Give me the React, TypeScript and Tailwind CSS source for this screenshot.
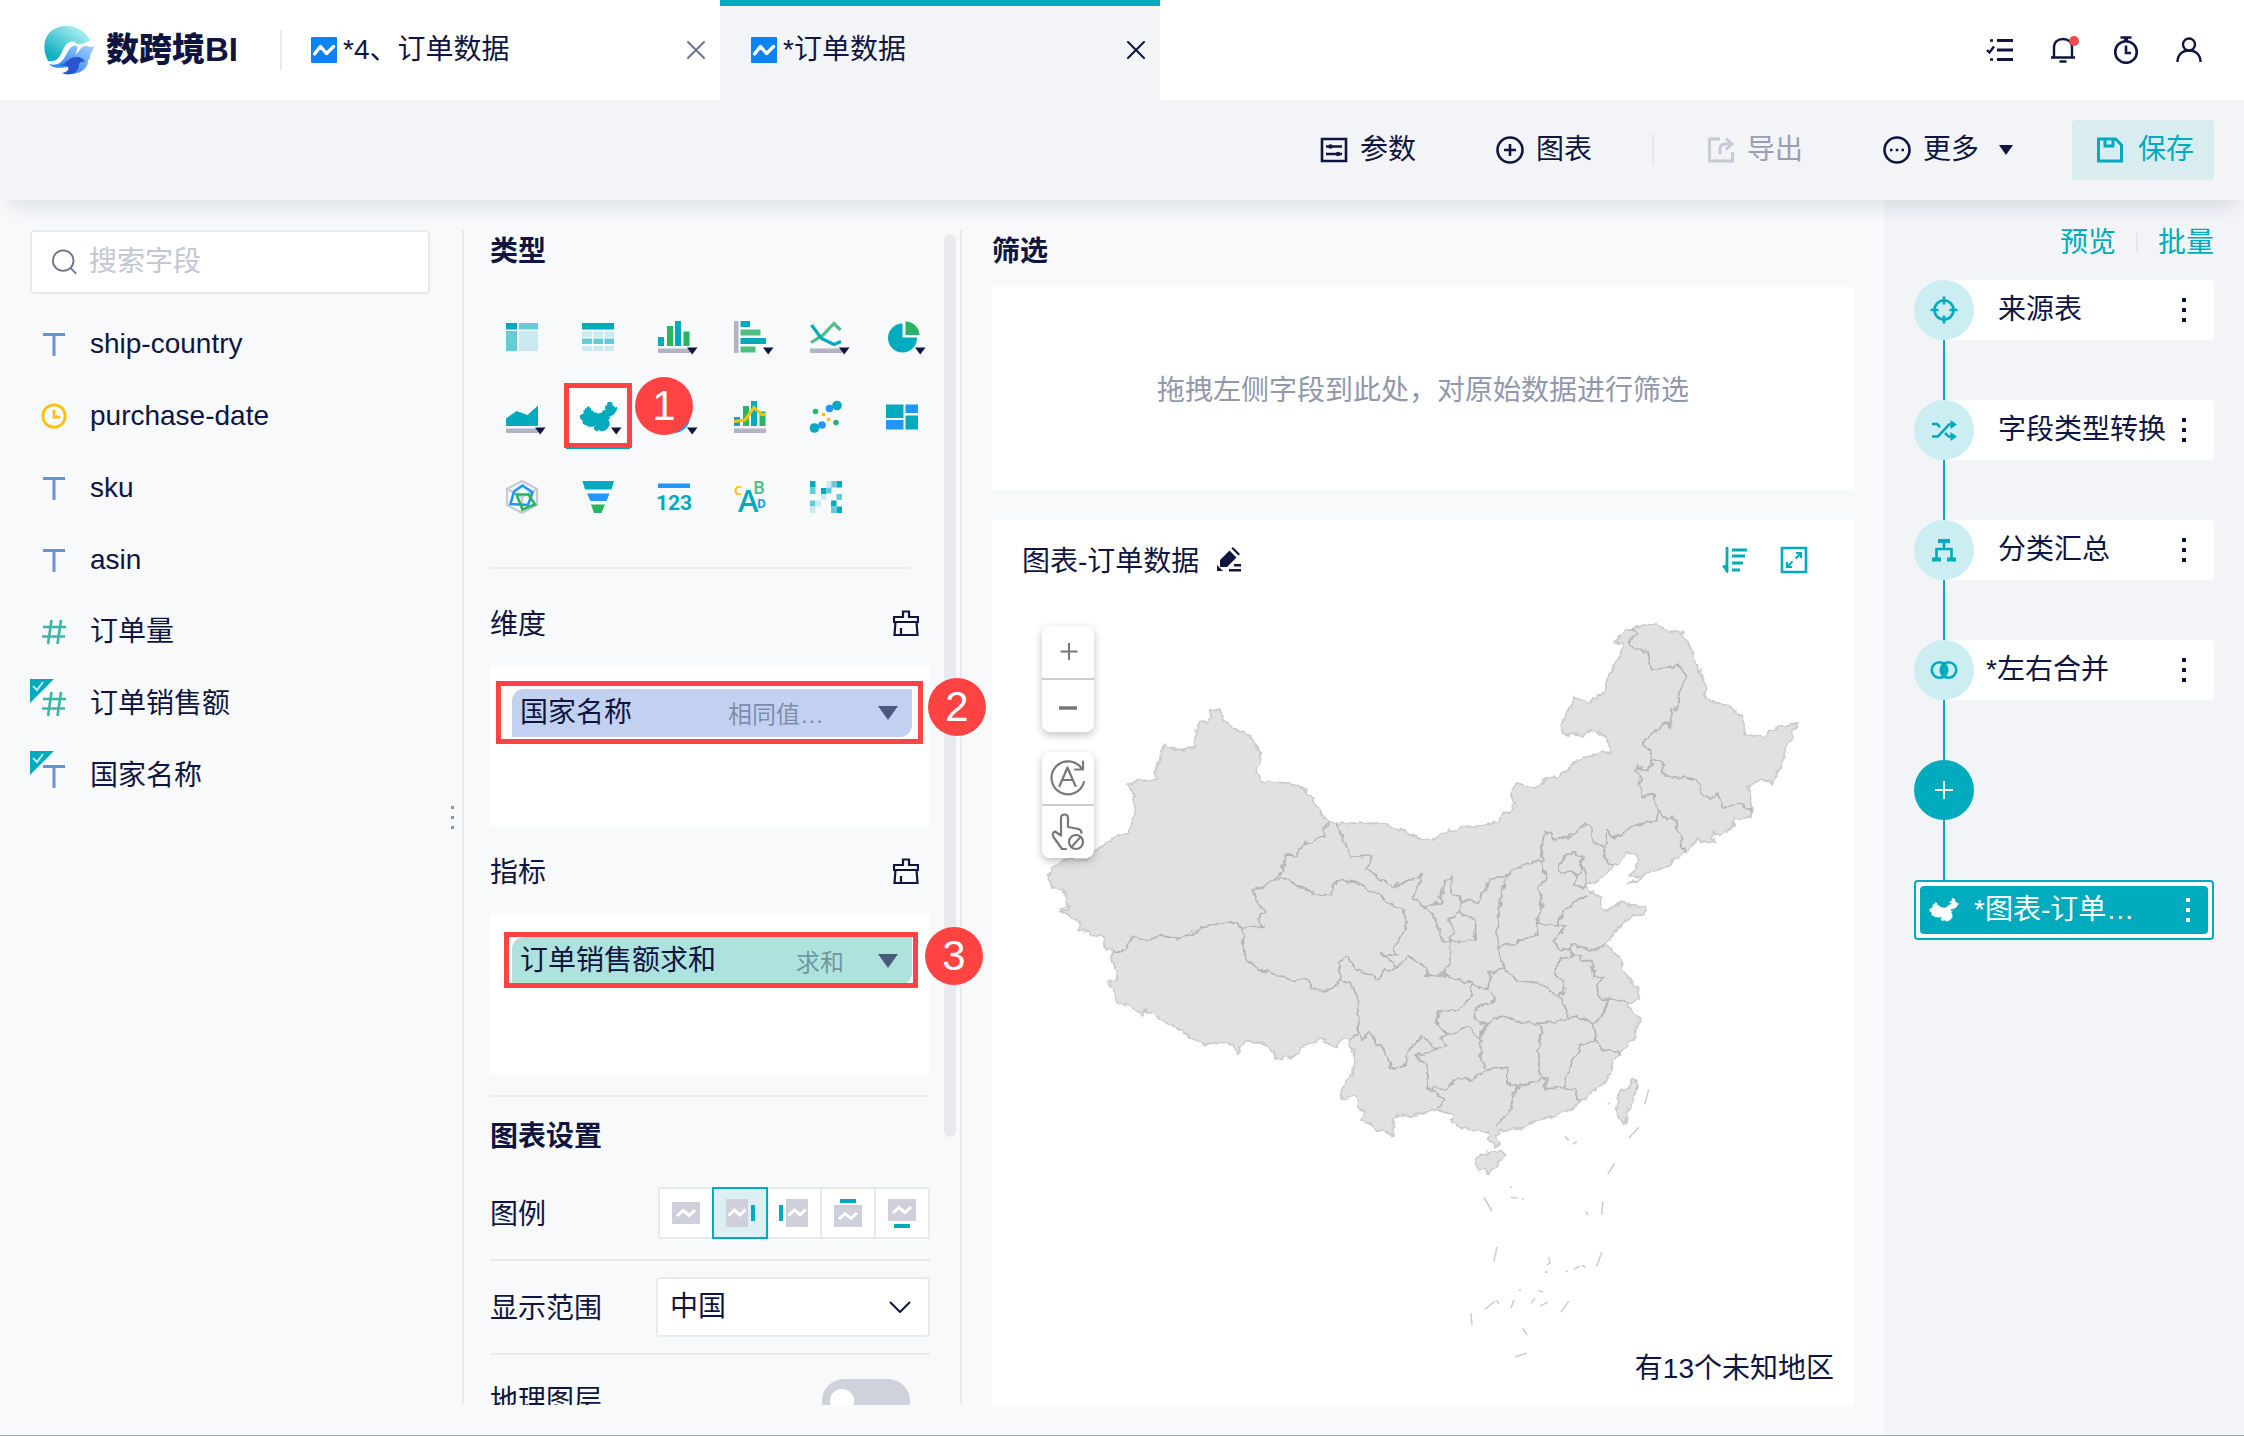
import { useState } from "react";
import type { ReactNode } from "react";

// Country outline and the borders drawn inside it
const OUTLINE =
  "M1094 851L1103 845L1117 837L1128 834L1131 821L1136 813L1133 802L1131 789L1126 785L1144 779L1157 780L1154 773L1158 763L1164 745L1173 749L1187 750L1195 747L1195 730L1199 723L1209 721L1211 711L1221 710L1223 718L1232 728L1251 737L1257 747L1261 755L1257 773L1261 782L1287 783L1298 787L1312 796L1319 810L1327 822L1364 824L1383 823L1394 829L1413 836L1431 841L1443 834L1462 827L1483 827L1498 822L1505 813L1517 806L1511 797L1512 788L1517 783L1528 787L1537 788L1548 778L1560 777L1568 771L1573 762L1587 757L1602 754L1613 755L1611 746L1604 737L1597 732L1588 731L1583 737L1577 733L1565 736L1561 731L1565 718L1574 697L1588 703L1597 696L1605 693L1605 687L1610 673L1617 661L1623 653L1622 643L1615 642L1625 630L1633 628L1642 626L1657 624L1670 631L1683 633L1688 642L1693 652L1699 670L1704 683L1707 697L1710 702L1720 702L1730 706L1738 714L1745 716L1744 727L1748 736L1767 736L1773 730L1788 725L1798 723L1793 732L1793 740L1788 743L1785 757L1778 773L1773 783L1760 779L1749 787L1752 798L1751 810L1750 818L1743 820L1735 819L1733 827L1725 833L1713 834L1715 842L1713 844L1702 842L1698 839L1690 848L1683 854L1668 865L1665 869L1650 872L1640 877L1631 876L1632 872L1640 863L1639 857L1630 853L1623 858L1620 863L1613 866L1607 873L1597 882L1588 884L1587 888L1593 895L1602 897L1602 908L1608 911L1613 908L1622 902L1633 905L1647 908L1645 915L1633 916L1620 926L1613 935L1606 945L1617 954L1623 967L1628 979L1635 986L1639 992L1638 1002L1630 1005L1627 1009L1637 1013L1640 1019L1638 1030L1632 1041L1623 1051L1615 1060L1611 1074L1607 1081L1597 1089L1588 1096L1580 1103L1573 1110L1560 1114L1543 1120L1537 1121L1527 1128L1510 1131L1500 1132L1495 1136L1499 1144L1495 1147L1490 1142L1489 1133L1480 1131L1465 1130L1453 1123L1452 1114L1438 1110L1432 1110L1423 1115L1410 1116L1400 1117L1392 1119L1393 1135L1386 1134L1383 1129L1377 1131L1371 1125L1362 1122L1365 1111L1358 1109L1356 1096L1342 1100L1341 1089L1347 1079L1354 1073L1355 1051L1350 1048L1348 1041L1342 1038L1337 1047L1320 1040L1300 1050L1293 1058L1275 1058L1273 1051L1267 1045L1247 1041L1240 1047L1237 1054L1233 1044L1217 1046L1202 1044L1190 1038L1177 1027L1170 1026L1153 1014L1145 1011L1142 1016L1135 1010L1115 1002L1112 990L1108 981L1116 981L1117 973L1112 962L1113 953L1106 948L1103 937L1087 934L1079 929L1077 920L1060 911L1067 908L1064 889L1052 888L1048 877L1053 867L1067 859L1087 859Z";

const ISLANDS =
  "M1638 1082L1633 1081L1622 1093L1616 1104L1618 1115L1624 1125L1627 1114L1633 1104ZM1482 1155L1503 1151L1505 1155L1498 1166L1488 1173L1477 1170L1476 1161ZM1628 885L1640 879L1632 881Z";

const BORDERS = [
  "M1327 822L1323 835L1312 841L1298 850L1295 856L1285 857L1279 879L1252 891L1256 903L1265 912L1258 919L1263 928L1243 927L1228 922L1203 927L1197 932L1177 939L1162 935L1148 940L1132 938L1125 951L1113 953",
  "M1243 927L1242 941L1247 960L1257 970L1277 976L1292 981L1307 979L1315 989L1325 992L1337 986L1340 979L1350 983L1357 996L1359 1028L1357 1036L1350 1041",
  "M1340 979L1340 962L1347 957L1357 970L1378 980L1385 970L1397 968L1382 954L1397 955L1394 948L1407 927L1402 910L1380 897L1357 883L1335 880L1330 895L1313 893L1300 887L1287 880L1278 880",
  "M1337 822L1343 842L1352 857L1372 855L1367 869L1391 887L1410 880L1422 876L1413 897L1423 907L1441 902L1443 884L1452 877L1451 893L1463 900L1478 903L1490 880L1508 875L1523 864L1542 861L1541 847L1545 833L1552 833L1553 841L1575 835L1580 826L1591 826L1595 845L1606 846L1607 830L1615 838L1633 827L1657 820L1658 810L1652 793L1643 798L1639 773L1635 771L1637 766L1648 770L1653 762L1652 752L1644 743L1667 722L1669 728L1673 709L1678 708L1679 693L1688 675L1678 663L1673 668L1652 669L1647 650L1637 649L1629 643L1636 633L1633 628",
  "M1653 762L1663 763L1665 775L1683 777L1698 782L1701 791L1712 800L1717 794L1723 809L1738 802L1751 811",
  "M1658 810L1668 820L1674 817L1681 837L1684 854M1606 846L1602 854L1613 866",
  "M1563 858L1573 852L1583 857L1580 873L1560 873L1559 866ZM1583 857L1580 865L1587 872L1588 884L1583 889L1575 885L1575 873",
  "M1542 861L1547 878L1537 888L1542 903L1537 923L1558 927L1558 920L1573 903L1588 896",
  "M1508 875L1500 895L1499 916L1497 949L1517 942L1537 935L1537 923",
  "M1423 907L1435 918L1442 941L1450 942L1455 931L1449 920L1460 912L1463 900M1460 912L1476 922L1475 940L1450 943L1451 963L1442 975L1427 977L1422 963L1407 956L1397 968",
  "M1442 975L1473 985L1488 991L1490 973L1505 969L1497 949M1505 969L1517 981L1537 983L1558 996L1565 1005L1568 1017",
  "M1558 996L1565 990L1563 981L1553 973L1562 959L1575 956L1568 949L1560 950L1552 942L1567 927L1558 927M1568 949L1573 945L1593 951L1606 945",
  "M1575 956L1592 963L1593 979L1603 977L1596 988L1600 998L1610 1000L1625 1003L1630 1005M1610 1000L1602 1017L1593 1024L1577 1017L1568 1018",
  "M1593 1024L1596 1041L1602 1050L1622 1054M1596 1041L1580 1047L1573 1060L1563 1089L1576 1089L1580 1102M1563 1089L1545 1089L1548 1081L1541 1079L1537 1049L1543 1034L1539 1024L1557 1022L1568 1018",
  "M1539 1024L1527 1024L1502 1016L1485 1025L1475 1019L1474 1009L1495 1002L1490 992",
  "M1473 986L1473 995L1460 1011L1440 1013L1437 1026L1450 1036L1467 1028L1480 1040L1485 1025M1482 1040L1480 1057L1487 1070L1473 1080L1458 1079L1445 1089L1427 1089L1427 1064L1416 1057L1435 1051L1447 1045L1440 1038L1450 1036",
  "M1435 1050L1422 1036L1407 1053L1406 1066L1393 1070L1382 1047L1367 1034L1362 1041L1359 1028M1427 1089L1446 1100L1438 1108",
  "M1487 1070L1507 1068L1507 1083L1517 1089L1510 1110L1495 1127M1517 1088L1541 1079",
];

const SEA_MARKS =
  "M1649 1090L1645 1105M1639 1128L1629 1139M1615 1164L1608 1175M1603 1202L1602 1215M1602 1253L1597 1267M1569 1302L1561 1313M1527 1354L1515 1358M1471 1314L1472 1326M1497 1248L1494 1262M1484 1198L1492 1212M1565 1137L1569 1141M1573 1145L1577 1142M1511 1198L1518 1199M1522 1200L1524 1200M1510 1188L1512 1188M1586 1212L1588 1216M1549 1258L1550 1264L1547 1266M1545 1273L1548 1273M1574 1270L1580 1267M1582 1266L1586 1268M1566 1272L1568 1272M1538 1291L1543 1293M1519 1291L1521 1291M1485 1310L1495 1302M1497 1301L1499 1305M1511 1309L1514 1301M1531 1304L1535 1299M1540 1307L1548 1303M1523 1329L1527 1336M1608 1104L1610 1104";

function ChinaShape({ className }: { className?: string }) {
  return (
    <svg viewBox="1046 622 754 528" preserveAspectRatio="none" className={className} fill="currentColor">
      <path d={OUTLINE} />
    </svg>
  );
}

function Logo() {
  return (
    <svg viewBox="0 0 50 49" className="h-[49px] w-[50px]">
      <defs>
        <linearGradient id="logo-sea" x1="0" y1="1" x2="1" y2="0">
          <stop offset="0.15" stopColor="#0fb0bf" />
          <stop offset="0.9" stopColor="#b5f4f5" />
        </linearGradient>
        <linearGradient id="logo-wave" x1="0" y1="1" x2="1" y2="0">
          <stop offset="0.1" stopColor="#1e7bff" />
          <stop offset="1" stopColor="#a9d2ff" />
        </linearGradient>
      </defs>
      <path d="M4 35C-4 20 1 0 23 0C35 0 43 7 46 15C41 16 38 19 34 18C31 17 31 15 28 15.500C22 16 20 22 17 28C14 34 10 36 4 35Z" fill="url(#logo-sea)" />
      <path d="M5 38C14 41 19 35 22 29C25 24 27 19 32 20C36 21 31 26 32 28C35 27 36 20 42 20C45 20 47 22 50 19.500C50 25 45 27 46 33L44 34C45 41 37 48 27 48C24 48 22 48 20 47C24 45 26 43 24 41C19 42 9 43 5 38Z" fill="url(#logo-wave)" />
      <path d="M15 39C22 39 24 31 32 31C37 31 40 33 41 36C38 35 35 36 35 39C35 43 32 47 27 48C24 49 20 48 18 47C25 46 26 42 23 40Z" fill="#2b55cf" />
    </svg>
  );
}

function WaveBadge() {
  return (
    <svg viewBox="0 0 26 26" className="size-[26px] shrink-0">
      <rect width="26" height="26" rx="1" fill="#0a84f5" />
      <path d="M3.500 17L9.500 9.500L15.500 16.500L22.500 9.500" fill="none" stroke="#fff" strokeWidth="3.400" strokeLinecap="round" strokeLinejoin="round" />
    </svg>
  );
}

function CloseIcon() {
  return (
    <svg viewBox="0 0 18 18" className="size-[18px]" stroke="currentColor" strokeWidth="2" strokeLinecap="round">
      <path d="M1 1L17 17M17 1L1 17" />
    </svg>
  );
}

function Line({ children, className = "size-7", width = 2.6 }: { children: ReactNode; className?: string; width?: number }) {
  return (
    <svg viewBox="0 0 28 28" className={className} fill="none" stroke="currentColor" strokeWidth={width}>
      {children}
    </svg>
  );
}

function BrushIcon() {
  return (
    <svg viewBox="0 0 26 26" className="size-[26px]" fill="none" stroke="currentColor" strokeWidth="2.200">
      <path d="M10 1.500H16V7H25V12H1V7H10ZM2.500 12L1.500 25H24.500L23.500 12M8 25V18" />
    </svg>
  );
}

function Dots() {
  return (
    <span className="flex flex-col gap-[6px]">
      <i className="size-1 bg-current" />
      <i className="size-1 bg-current" />
      <i className="size-1 bg-current" />
    </span>
  );
}

const TEAL = "#00abbd";
const GREEN = "#28b463";
const BLUE = "#2196ff";
const GRAY = "#b2b4c4";
const MID = "#66cbd7";
const PALE = "#c9eaf0";
const NAVY = "#0f1540";

const caret = <path d="M37 34.500H47.500L42.200 41.500Z" fill={NAVY} />;
const base = <rect x="8" y="35.500" width="32" height="4.500" fill={GRAY} />;

const chartTypes: { label: string; art: ReactNode }[] = [
  {
    label: "透视表",
    art: (
      <>
        <rect x="8" y="10" width="11" height="6.500" fill={TEAL} />
        <rect x="21" y="10" width="19" height="6.500" fill={MID} />
        <rect x="8" y="18" width="11" height="20" fill={MID} />
        <rect x="21" y="18" width="19" height="20" fill={PALE} />
      </>
    ),
  },
  {
    label: "明细表",
    art: (
      <>
        <rect x="8" y="10" width="32" height="6.500" fill={TEAL} />
        <path d="M8 18.500h10v5.500h-10zM19.500 18.500h9.500v5.500h-9.500zM30.500 18.500h9.500v5.500h-9.500zM8 33h10v5h-10zM19.500 33h9.500v5h-9.500zM30.500 33h9.500v5h-9.500z" fill={PALE} />
        <path d="M8 25.500h10v5.500h-10zM19.500 25.500h9.500v5.500h-9.500zM30.500 25.500h9.500v5.500h-9.500z" fill={MID} />
      </>
    ),
  },
  {
    label: "柱状图",
    art: (
      <>
        <path d="M8 24h6v9h-6zM25 8h6v25h-6z" fill={TEAL} />
        <path d="M17 13h6v20h-6zM33.500 18.500h6v14.500h-6z" fill={GREEN} />
        {base}
        {caret}
      </>
    ),
  },
  {
    label: "条形图",
    art: (
      <>
        <rect x="8" y="8" width="4.500" height="32" fill={GRAY} />
        <path d="M14.500 8h9.500v6h-9.500zM14.500 25h25.500v6h-25.500z" fill={TEAL} />
        <path d="M14.500 16.500h20v6h-20zM14.500 33.500h15v6h-15z" fill="#4fbf81" />
        {caret}
      </>
    ),
  },
  {
    label: "折线图",
    art: (
      <>
        <path d="M9 29.500L21 22L32 10.500L38.500 17" fill="none" stroke="#4fbf81" strokeWidth="3.200" />
        <path d="M9.500 12L19.500 25.500L32 31.500L39 28.500" fill="none" stroke={TEAL} strokeWidth="3.200" />
        {base}
        {caret}
      </>
    ),
  },
  {
    label: "饼图",
    art: (
      <>
        <path d="M24.500 10.500A14.500 14.500 0 1 0 39 24.500H24.500Z" fill={TEAL} />
        <path d="M27.500 8.500A14 14 0 0 1 41.500 22H27.500Z" fill={GREEN} />
        {caret}
      </>
    ),
  },
  {
    label: "面积图",
    art: (
      <>
        <path d="M8 25.500L18.500 18L29.500 22L40 12.500V33H8Z" fill={TEAL} />
        {base}
        {caret}
      </>
    ),
  },
  {
    label: "地图",
    art: (
      <>
        <svg x="6" y="9" width="37" height="29.500" viewBox="1046 622 754 528" preserveAspectRatio="none">
          <path d={OUTLINE} fill={TEAL} stroke={TEAL} strokeWidth="24" />
        </svg>
        {caret}
      </>
    ),
  },
  {
    label: "仪表盘",
    art: (
      <>
        <circle cx="24" cy="24" r="14" fill="none" stroke={BLUE} strokeWidth="4" />
        {caret}
      </>
    ),
  },
  {
    label: "组合图",
    art: (
      <>
        <path d="M8 24h6v9h-6zM25 8h6v25h-6z" fill={TEAL} />
        <path d="M17 13h6v20h-6zM33.500 18.500h6v14.500h-6z" fill={GREEN} />
        <path d="M8 28.500L19 27L28 14.500L35.500 21.500H39.500" fill="none" stroke="#ffc107" strokeWidth="3" />
        {base}
      </>
    ),
  },
  {
    label: "散点图",
    art: (
      <>
        <g fill={GREEN}>
          <circle cx="13.500" cy="18.500" r="2.800" />
          <circle cx="34" cy="29.500" r="2.800" />
        </g>
        <g fill={BLUE}>
          <circle cx="27.500" cy="15.500" r="3.800" />
          <circle cx="20" cy="32" r="3.800" />
        </g>
        <g fill={TEAL}>
          <circle cx="35" cy="12.500" r="4.800" />
          <circle cx="12.500" cy="35" r="4.800" />
        </g>
        <g fill="#ffc107">
          <circle cx="21.500" cy="21.500" r="1.900" />
          <circle cx="26.500" cy="26.500" r="1.900" />
        </g>
      </>
    ),
  },
  {
    label: "矩形树图",
    art: (
      <>
        <path d="M8 11.500h17.500v13.500h-17.500zM27.500 22.500h12.500v14h-12.500z" fill={TEAL} />
        <path d="M27.500 11.500h12.500v8.500h-12.500zM8 27h17.500v9.500h-17.500z" fill={BLUE} />
      </>
    ),
  },
  {
    label: "雷达图",
    art: (
      <g fill="none">
        <path d="M24 8L39 16V32L24 40L9 32V16ZM9 16L24 24L39 16M24 24V40" stroke="#c9cad6" strokeWidth="2.200" />
        <path d="M24.500 12.500L34.500 19.500L30 32L12.500 31L16 18.500Z" stroke={BLUE} strokeWidth="2.600" />
        <path d="M18.500 21.500H30.500L37 31.500L24.500 36.500Z" stroke={GREEN} strokeWidth="2.600" />
      </g>
    ),
  },
  {
    label: "漏斗图",
    art: (
      <>
        <path d="M8.500 8H40L37.500 16.500H11Z" fill={TEAL} />
        <path d="M13 20.500H35.500L32.500 28H16.500Z" fill={BLUE} />
        <path d="M17 31.500H31L27.500 40H20Z" fill={GREEN} />
      </>
    ),
  },
  {
    label: "指标卡",
    art: (
      <>
        <rect x="8" y="10.500" width="32" height="4.500" fill={BLUE} />
        <text x="24" y="37" textAnchor="middle" fill={TEAL} className="font-[Roboto] text-[21px] font-bold">123</text>
      </>
    ),
  },
  {
    label: "词云",
    art: (
      <>
        <text x="12" y="39" fill={TEAL} className="font-['Open_Sans'] text-[31px] font-semibold">A</text>
        <text x="27" y="21" fill="#4fbf81" className="font-['Open_Sans'] text-[18px] font-semibold">B</text>
        <text x="8" y="22" fill="#ffc107" className="font-['Open_Sans'] text-[13px] font-bold">C</text>
        <text x="31" y="35" fill={BLUE} className="font-['Open_Sans'] text-[12px] font-bold">D</text>
      </>
    ),
  },
  {
    label: "热力图",
    art: (
      <>
        <path d="M8 8h5.500v6.500h-5.500zM34.500 8h5.500v6.500h-5.500zM19 15h5.500v6h-5.500zM29 27.500h5.500v6h-5.500zM34.500 33.500h5.500v6.500h-5.500z" fill={TEAL} />
        <path d="M8 14.500h5.500v6.500h-5.500zM29 8h5.500v6.500h-5.500zM24.500 14.500h5v6h-5zM34.500 21h5.500v6h-5.500zM8 27.500h5.500v6h-5.500zM29 33.500h5.500v6.500h-5.500z" fill={MID} />
        <path d="M24.500 8h5v6.500h-5zM19 21h5.500v6h-5.500zM13.500 27.500h5.500v6h-5.500zM8 33.500h5.500v6.500h-5.500z" fill={PALE} />
      </>
    ),
  },
];

const fields = [
  { name: "ship-country", kind: "text" },
  { name: "purchase-date", kind: "date" },
  { name: "sku", kind: "text" },
  { name: "asin", kind: "text" },
  { name: "订单量", kind: "number" },
  { name: "订单销售额", kind: "number", used: true },
  { name: "国家名称", kind: "text", used: true },
];

function FieldIcon({ kind }: { kind: string }) {
  if (kind === "date") {
    return (
      <Line className="size-7 text-[#ffc107]" width={2.8}>
        <circle cx="14" cy="14" r="11.200" />
        <path d="M14 8V15H20" />
      </Line>
    );
  }
  if (kind === "number") {
    return (
      <Line className="size-7 text-[#3ab8a8]">
        <path d="M3 9H26M2 18.500H25M11.500 2L8 26M21 2L17.500 26" />
      </Line>
    );
  }
  return (
    <Line className="size-7 text-[#6a8fdc]" width={3}>
      <path d="M3 4.500H25M14 4.500V26" />
    </Line>
  );
}

function Step({ n, className }: { n: number; className: string }) {
  return (
    <span className={`absolute z-20 flex size-[58px] items-center justify-center rounded-full bg-[#ff4343] text-[42px] leading-none text-white ${className}`}>
      {n}
    </span>
  );
}

function Header() {
  return (
    <header className="flex h-[100px] shrink-0 items-center bg-white">
      <a href="#" className="flex w-[280px] items-center gap-3 pl-11">
        <Logo />
        <span className="text-[33px] font-black">数跨境BI</span>
      </a>
      <nav className="flex h-full flex-1 items-center">
        <span className="-mr-0.5 h-10 w-0.5 bg-[#e7e9ed]" />
        <div className="flex w-[440px] items-center gap-1.5 pr-[15px] pl-[31px]">
          <WaveBadge />
          <a href="#" className="flex-1">*4、订单数据</a>
          <button aria-label="关闭" className="text-[#6f738c]">
            <CloseIcon />
          </button>
        </div>
        <div className="flex h-full w-[440px] items-center gap-1.5 border-t-6 border-[#00abbd] bg-[#f2f4f8] pr-[15px] pb-1.5 pl-[31px]">
          <WaveBadge />
          <a href="#" className="flex-1">*订单数据</a>
          <button aria-label="关闭">
            <CloseIcon />
          </button>
        </div>
      </nav>
      <div className="flex gap-[35px] pr-[41px]">
        <button aria-label="任务">
          <Line width={3}>
            <path d="M11 4.500H27M11 14H27M11 23.500H27" />
            <path d="M4 4.500H7M4 23.500H7M1 14L3.500 16.500L8 10.500" strokeWidth="2.400" />
          </Line>
        </button>
        <button aria-label="通知" className="relative">
          <Line width={2.4}>
            <path d="M2 21.500H26M5 21.500V12C5 6 9 3 14 3S23 6 23 12V21.500M10.500 25.500H17.500" />
          </Line>
          <span className="absolute top-0 -right-0.5 size-2.5 rounded-full bg-[#ef4b4b]" />
        </button>
        <button aria-label="定时">
          <Line>
            <circle cx="14" cy="16" r="10.800" />
            <path d="M14 9.500V17H19M8.500 1.500H19.500" />
            <path d="M14 1V5" strokeWidth="4" />
          </Line>
        </button>
        <button aria-label="账户">
          <Line width={2.4}>
            <circle cx="14" cy="8.500" r="6" />
            <path d="M2.500 26C2.500 19 7 14.500 14 14.500S25.500 19 25.500 26" />
          </Line>
        </button>
      </div>
    </header>
  );
}

function Toolbar() {
  return (
    <div className="relative z-10 flex h-[100px] shrink-0 items-center justify-end bg-[#f2f4f8] pr-[30px] shadow-[0_16px_20px_-10px_rgba(15,21,64,0.12)]">
      <button className="flex items-center gap-3">
        <Line>
          <path d="M2 3H26V25H2ZM6 10.500H22M6 18H22" />
          <circle cx="10.500" cy="10.500" r="2.200" fill="currentColor" stroke="none" />
          <circle cx="18" cy="18" r="2.200" fill="currentColor" stroke="none" />
        </Line>
        参数
      </button>
      <button className="ml-20 flex items-center gap-3">
        <Line>
          <circle cx="14" cy="14" r="12.500" />
          <path d="M14 8V20M8 14H20" />
        </Line>
        图表
      </button>
      <span className="mr-[53px] ml-[60px] h-8 w-0.5 bg-[#e6e8ed]" />
      <button disabled className="flex items-center gap-3 text-[#9a9eb2]">
        <Line className="size-7 text-[#c6c9d5]" width={2.8}>
          <path d="M13 3H2.500V25H25.500V16M13 18V13Q13 8 19 8H24M19 2.500L25 8L19 13.500" />
        </Line>
        导出
      </button>
      <button className="ml-20 flex items-center gap-3">
        <Line>
          <circle cx="14" cy="14" r="12.500" />
          <path d="M7 14H9.500M12.700 14H15.300M18.500 14H21" />
        </Line>
        更多
        <svg viewBox="0 0 14 10" className="ml-2 h-2.5 w-3.5" fill="currentColor">
          <path d="M0 0H14L7 10Z" />
        </svg>
      </button>
      <button className="ml-[59px] flex h-[60px] w-[142px] items-center gap-3.5 rounded bg-[#d9ecf0] pl-6 text-[#00abbd]">
        <Line width={3}>
          <path d="M2.500 3H19.500L25.500 9V25H2.500ZM9 3V10H17V3" />
        </Line>
        保存
      </button>
    </div>
  );
}

function FieldPanel() {
  return (
    <aside className="my-[30px] flex w-[464px] shrink-0 justify-between border-r-2 border-[#e8eaee] pl-[30px]">
      <div className="w-[400px]">
        <label className="flex h-16 items-center gap-3 rounded border-2 border-[#e8eaee] bg-white px-5">
          <Line className="size-7 text-[#6d7290]" width={2}>
            <circle cx="12.500" cy="12.500" r="11.500" />
            <path d="M20.500 20.500L27 27" />
          </Line>
          <input type="text" aria-label="搜索字段" placeholder="搜索字段" className="w-full outline-none placeholder:text-[#c3c6d3]" />
        </label>
        <ul className="mt-[25px] flex flex-col gap-6">
          {fields.map((field) => (
            <li key={field.name} className="relative flex h-12 items-center gap-[22px] pt-0.5 pl-[10px]">
              {field.used && (
                <svg viewBox="0 0 24 24" className="absolute top-0 left-0 size-6">
                  <path d="M0 0H24L0 24Z" fill={TEAL} />
                  <path d="M3 7L7 11L13 3" fill="none" stroke="#c5f2f5" strokeWidth="2" />
                </svg>
              )}
              <FieldIcon kind={field.kind} />
              {field.name}
            </li>
          ))}
        </ul>
      </div>
      <span className="mr-2 flex flex-col gap-[7px] self-center text-[#8e93a8]">
        <i className="size-[3px] bg-current" />
        <i className="size-[3px] bg-current" />
        <i className="size-[3px] bg-current" />
      </span>
    </aside>
  );
}

function Pill({ name, method, tone, align }: { name: string; method: string; tone: string; align: string }) {
  return (
    <button className={`flex h-12 w-[400px] items-center rounded-tl-xl rounded-br-xl pr-3.5 pl-2 ${tone}`}>
      <span className="flex-1 text-left">{name}</span>
      <span className={`mr-[34px] w-[116px] pt-1 text-[24px] text-[#0f1540]/40 ${align}`}>{method}</span>
      <svg viewBox="0 0 20 14" className="h-3.5 w-5" fill={NAVY} fillOpacity="0.65">
        <path d="M0 0H20L10 14Z" />
      </svg>
    </button>
  );
}

const legendArt = [
  "M6 6H34V28H6Z|M11 20L17 14.500L23 19.500L29 14|",
  "M6 3H28V31H6Z|M8.500 19.500L14.500 14L20 19L25.500 13.500|M33 9V25",
  "M12 3H34V31H12Z|M14.500 19.500L20.500 14L26 19L31.500 13.500|M7 9V25",
  "M6 9H34V31H6Z|M11 23L17 17.500L23 22.500L29 17|M12 5H28",
  "M6 3H34V25H6Z|M11 17L17 11.500L23 16.500L29 11|M12 30H28",
];
const legendNames = ["隐藏", "右侧", "左侧", "顶部", "底部"];

function SettingsPanel() {
  const [legend, setLegend] = useState(1);

  return (
    <section className="my-[30px] flex w-[498px] shrink-0 justify-between border-r-2 border-[#e8eaee] pr-1 pl-[26px]">
      <div className="flex w-[440px] flex-col">
        <h2 className="pt-0.5 font-bold">类型</h2>
        <div className="mt-[33px] grid grid-cols-[repeat(6,64px)] gap-x-3 gap-y-4">
          {chartTypes.map((type) => (
            <div key={type.label} className="relative">
              <button
                aria-label={type.label}
                className={`flex size-16 items-center justify-center ${type.label === "地图" ? "border-b-2 border-[#00abbd] bg-white pt-0.5" : ""}`}
              >
                <svg viewBox="0 0 48 48" className="size-12">
                  {type.art}
                </svg>
              </button>
              {type.label === "地图" && (
                <>
                  <span className="absolute -inset-x-0.5 -top-0.5 bottom-px border-5 border-[#ff4343]" />
                  <Step n={1} className="-top-2 left-[69px]" />
                </>
              )}
            </div>
          ))}
        </div>
        <hr className="mt-[38px] mr-5 border-t-2 border-[#e8eaee]" />

        <div className="mt-9 flex items-center justify-between pr-[11px]">
          <h3>维度</h3>
          <button aria-label="清空维度" className="pb-1">
            <BrushIcon />
          </button>
        </div>
        <div className="mt-[22px] h-40 bg-white pt-[22px] pl-[22px]">
          <div className="relative w-[400px]">
            <Pill name="国家名称" method="相同值…" tone="bg-[#c3d1f0]" align="text-left" />
            <span className="absolute -top-2 -right-[11px] -bottom-[7px] -left-4 border-5 border-[#ff4343]" />
            <Step n={2} className="-top-[11px] left-[416px]" />
          </div>
        </div>

        <div className="mt-[26px] flex items-center justify-between pr-[11px]">
          <h3>指标</h3>
          <button aria-label="清空指标" className="pb-1">
            <BrushIcon />
          </button>
        </div>
        <div className="mt-[22px] h-40 bg-white pt-[22px] pl-[22px]">
          <div className="relative w-[400px]">
            <Pill name="订单销售额求和" method="求和" tone="bg-[#aee2dc]" align="text-right" />
            <span className="absolute -top-[5px] -right-1.5 -bottom-[3px] -left-2 border-5 border-[#ff4343]" />
            <Step n={3} className="-top-2.5 left-[413px]" />
          </div>
        </div>

        <hr className="mt-5 border-t-2 border-[#e8eaee]" />
        <h2 className="mt-5 font-bold">图表设置</h2>
        <div className="mt-[30px] flex items-center justify-between">
          <span className="pt-1">图例</span>
          <div className="flex bg-white">
            {legendArt.map((art, i) => {
              const [frame, wave, bar] = art.split("|");
              return (
                <button
                  key={art}
                  aria-label={legendNames[i]}
                  aria-pressed={legend === i}
                  onClick={() => setLegend(i)}
                  className={`-ml-0.5 flex h-[52px] w-14 items-center justify-center border-2 ${
                    legend === i ? "relative border-[#00abbd] bg-[#dcf0f4]" : "border-[#e8eaee]"
                  }`}
                >
                  <svg viewBox="0 0 40 34" className="h-[34px] w-10" fill="none">
                    <path d={frame} fill="#cfd0db" />
                    <path d={wave} stroke="#fff" strokeWidth="3" />
                    <path d={bar} stroke={TEAL} strokeWidth="4" />
                  </svg>
                </button>
              );
            })}
          </div>
        </div>
        <hr className="mt-5 border-t-2 border-[#e8eaee]" />
        <div className="mt-4 flex items-center justify-between">
          <label htmlFor="range" className="pt-1">显示范围</label>
          <div className="relative">
            <select id="range" className="h-[60px] w-[274px] appearance-none rounded border-2 border-[#e8eaee] bg-white px-3 outline-none">
              <option>中国</option>
            </select>
            <svg viewBox="0 0 22 12" className="pointer-events-none absolute top-6 right-[19px] h-3 w-[22px]" fill="none" stroke={NAVY} strokeWidth="2">
              <path d="M1 1L11 11L21 1" />
            </svg>
          </div>
        </div>
        <hr className="mt-4 border-t-2 border-[#e8eaee]" />
        <div className="min-h-0 flex-1 overflow-hidden pt-6">
          <div className="flex items-center justify-between pr-5">
            <label htmlFor="layer">地理图层</label>
            <input
              id="layer"
              type="checkbox"
              className="h-11 w-[88px] appearance-none rounded-full bg-[#cfd2db] p-2 before:mt-0.5 before:block before:size-6 before:rounded-full before:bg-white checked:bg-[#00abbd] checked:before:ml-auto"
            />
          </div>
        </div>
      </div>
      <div className="mt-1 h-[903px] w-3 rounded-full bg-[#e8eaee]" />
    </section>
  );
}

function ChinaMap() {
  return (
    <svg viewBox="992 604 862 802" className="h-full w-full">
      <filter id="coast" x="-5%" y="-5%" width="110%" height="110%" colorInterpolationFilters="sRGB">
        <feTurbulence type="fractalNoise" baseFrequency="0.12" numOctaves="2" seed="4" />
        <feDisplacementMap in="SourceGraphic" scale="8" xChannelSelector="R" yChannelSelector="G" />
      </filter>
      <g fill="none" strokeWidth="1.800" strokeLinejoin="round" filter="url(#coast)">
        <path d={OUTLINE + ISLANDS} fill="#e1e1e1" stroke="#cbcbcb" />
        {BORDERS.map((d) => (
          <path key={d} d={d} stroke="#b5b5b5" />
        ))}
      </g>
      <path d={SEA_MARKS} fill="none" stroke="#cfcfcf" strokeWidth="1.600" />
    </svg>
  );
}

function ChartPanel() {
  return (
    <main className="m-[30px] flex min-w-0 flex-1 flex-col">
      <h2 className="pt-0.5 font-bold">筛选</h2>
      <div className="mt-[15px] flex h-[203px] shrink-0 items-center justify-center bg-white pt-1 text-[#9397ac]">
        拖拽左侧字段到此处，对原始数据进行筛选
      </div>
      <div className="mt-[30px] flex min-h-0 flex-1 flex-col bg-white">
        <div className="flex h-[84px] shrink-0 items-center pr-[46px] pl-[30px] text-[#00abbd]">
          <h3 className="text-[#0f1540]">图表-订单数据</h3>
          <button aria-label="重命名" className="ml-[17px] pb-1 text-[#0f1540]">
            <svg viewBox="0 0 26 26" className="size-[26px]" fill="currentColor">
              <path d="M4 13L13.500 3.500L20.500 10.500L11 20H4ZM15.500 1.500L17 0L24 7L22.500 8.500ZM1 18L7 24H1ZM18 17H25V19.500H18ZM13 22H25V24.500H13Z" />
            </svg>
          </button>
          <button aria-label="排序" className="ml-auto pb-1">
            <Line width={2.800}>
              <path d="M7 1V26" />
              <path d="M2 20L7 27L8 27V18Z" fill="currentColor" stroke="none" />
              <path d="M12 4H27M12 10H25M12 17H23M12 24H20" />
            </Line>
          </button>
          <button aria-label="全屏" className="ml-8 pb-1">
            <Line width={2.600}>
              <path d="M2 2H26V26H2Z" />
              <path d="M16 7H21V12M21 7L15.500 12.500M12 21H7V16M7 21L12.500 15.500" strokeWidth="2" />
            </Line>
          </button>
        </div>
        <div className="relative min-h-0 flex-1">
          <ChinaMap />
          <div className="absolute top-[22px] left-[50px] flex flex-col gap-5 text-[#7b7779]">
            <div className="flex w-[52px] flex-col divide-y-2 divide-[#cccccc] rounded-lg bg-white shadow-[0_3px_8px_rgba(0,0,0,0.25)]">
              <button aria-label="放大" className="flex h-[54px] items-center justify-center border-b-2 border-[#cccccc]">
                <Line width={2}>
                  <path d="M15 5V22M6.500 13.500H23.500" />
                </Line>
              </button>
              <button aria-label="缩小" className="flex h-[52px] items-center justify-center">
                <Line width={3.500}>
                  <path d="M5 16H23" />
                </Line>
              </button>
            </div>
            <div className="flex w-[52px] flex-col rounded-lg bg-white shadow-[0_3px_8px_rgba(0,0,0,0.25)]">
              <button aria-label="自动" className="flex h-[54px] items-center justify-center border-b-2 border-[#cccccc]">
                <svg viewBox="0 0 36 36" className="size-9" fill="none" stroke="currentColor" strokeWidth="2.200" strokeLinecap="round" strokeLinejoin="round">
                  <path d="M34 22A16.500 16.500 0 1 1 32 9M33 1.500V9.500H25M9.500 26L17.500 7.500L25.500 26M12 20H23" />
                </svg>
              </button>
              <button aria-label="禁止点选" className="flex h-[52px] items-center justify-center">
                <svg viewBox="0 0 36 40" className="h-10 w-9" fill="none" stroke="currentColor" strokeWidth="2.200" strokeLinecap="round" strokeLinejoin="round">
                  <path d="M16 37H12L3.500 25Q1.500 20.500 5 19.500L11 23.500V6Q11 2.500 14.500 2.500T18 6V15L28.500 17Q31.500 18 31.500 21" />
                  <circle cx="26" cy="30" r="7" />
                  <path d="M21.500 35L30.500 25" />
                </svg>
              </button>
            </div>
          </div>
          <p className="absolute right-5 bottom-4">有13个未知地区</p>
        </div>
      </div>
    </main>
  );
}

const steps = [
  {
    name: "来源表",
    art: (
      <>
        <circle cx="14" cy="14" r="9.500" />
        <path d="M14 0.500V8.500M14 19.500V27.500M0.500 14H8.500M19.500 14H27.500" />
      </>
    ),
  },
  {
    name: "字段类型转换",
    art: (
      <>
        <path d="M2 8H7L10 11M2 20.500H8L19 8.500H22M15 17L18.500 20.500H22" />
        <path d="M20.500 4L27 8.500L20.500 13ZM20.500 16L27 20.500L20.500 25Z" fill="currentColor" stroke="none" />
      </>
    ),
  },
  {
    name: "分类汇总",
    art: (
      <>
        <path d="M8 5H20M2 23.500H11M17 23.500H26" strokeWidth="4" />
        <path d="M14 6V13M6.500 22V13H21.500V22" />
      </>
    ),
  },
  {
    name: "*左右合并",
    art: (
      <>
        <circle cx="9.500" cy="14" r="7.800" />
        <circle cx="18.500" cy="14" r="7.800" />
        <path d="M14 8Q17.500 14 14 20Q10.500 14 14 8Z" fill="currentColor" />
      </>
    ),
  },
];

function FlowPanel() {
  return (
    <aside className="w-[360px] shrink-0 bg-[#f2f4f8] px-[30px] pt-[23px]">
      <div className="flex items-center justify-end text-[#00abbd]">
        <a href="#">预览</a>
        <span className="mx-5 h-5 w-0.5 bg-[#e3e6eb]" />
        <a href="#">批量</a>
      </div>
      <ol className="mt-[17px]">
        {steps.map((step) => (
          <li key={step.name}>
            <div className="flex h-[60px] items-center rounded bg-linear-to-r from-transparent from-10% to-white to-10% pr-7">
              <span className="flex size-[60px] shrink-0 items-center justify-center rounded-full bg-[#cceef2] text-[#00abbd]">
                <Line width={2.600}>{step.art}</Line>
              </span>
              <span className={`flex-1 whitespace-nowrap ${step.name.startsWith("*") ? "pl-3" : "pl-6"}`}>{step.name}</span>
              <button aria-label={`${step.name}菜单`}>
                <Dots />
              </button>
            </div>
            <span className="ml-[29px] block h-[60px] w-0.5 bg-[#00abbd]" />
          </li>
        ))}
        <li>
          <button aria-label="添加步骤" className="flex size-[60px] items-center justify-center rounded-full bg-[#00abbd] text-white">
            <Line width={2}>
              <path d="M14 5V23M5 14H23" />
            </Line>
          </button>
          <span className="ml-[29px] block h-[60px] w-0.5 bg-[#00abbd]" />
        </li>
        <li className="h-[60px] rounded border-2 border-[#00abbd] bg-white p-1">
          <div className="flex h-full items-center rounded bg-[#00abbd] pr-[18px] pl-[9px] text-white">
            <ChinaShape className="h-6 w-[30px]" />
            <span className="flex-1 pl-[15px] whitespace-nowrap">*图表-订单…</span>
            <button aria-label="图表菜单">
              <Dots />
            </button>
          </div>
        </li>
      </ol>
    </aside>
  );
}

export default function App() {
  return (
    <div className="flex h-screen flex-col overflow-hidden border-b border-[#a3a7ab] bg-[#f7f9fb] font-['Liberation_Sans','Noto_Sans_CJK_SC',sans-serif] text-[28px] leading-10 text-[#0f1540]">
      <Header />
      <Toolbar />
      <div className="flex min-h-0 flex-1">
        <FieldPanel />
        <SettingsPanel />
        <ChartPanel />
        <FlowPanel />
      </div>
    </div>
  );
}
